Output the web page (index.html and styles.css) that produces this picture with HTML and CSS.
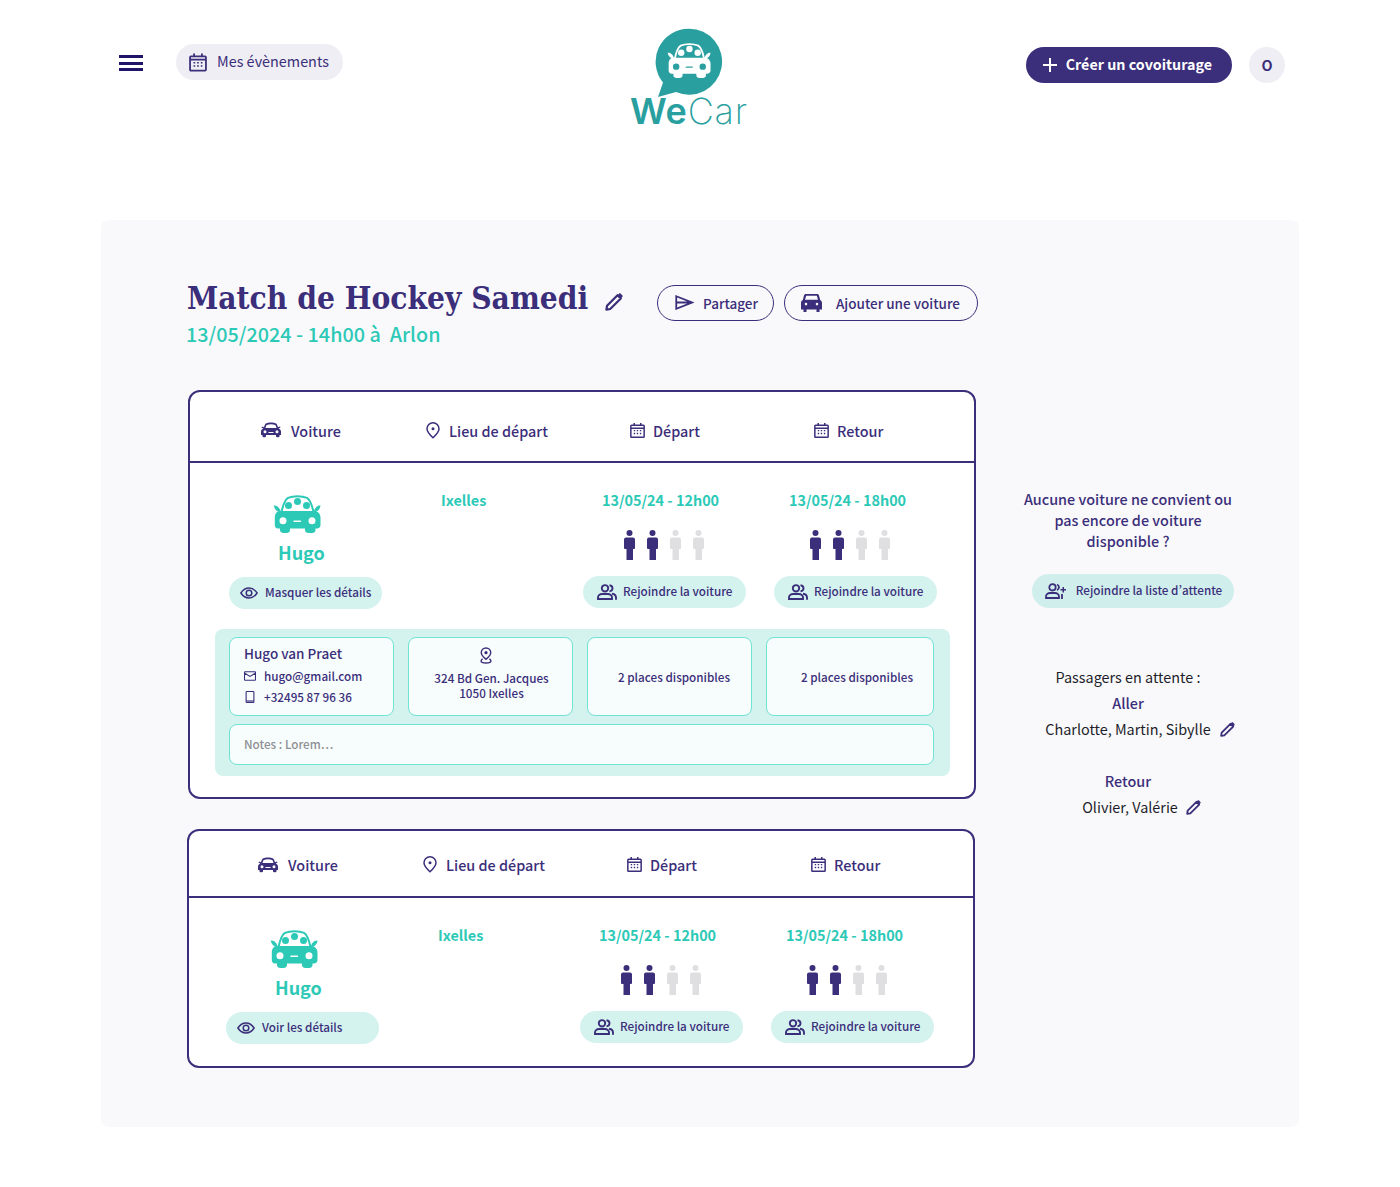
FILE: index.html
```html
<!DOCTYPE html>
<html lang="fr">
    <head>
        <meta charset="utf-8">
        <title>WeCar - Match de Hockey Samedi</title>
        <link rel="stylesheet" href="styles.css">
    </head>

    <body>
        <!-- Icons -->
        <svg class="icon-defs">
            <symbol id="i-car" viewBox="0 0 48 38">
                <path fill="none" stroke="currentColor" stroke-width="2" d="M8.5 17C10 10 12 4.500 15 2.800C20 .6 29 .6 34 2.800C37 4.500 39 10 40.500 17"/>
                <circle cx="15.500" cy="10.500" r="3.500" fill="currentColor"/>
                <circle cx="24.500" cy="6.500" r="3.500" fill="currentColor"/>
                <circle cx="33.500" cy="10.500" r="3.500" fill="currentColor"/>
                <path fill="currentColor" d="M.8 10.500C4 10 7 13 7.800 17C4 17 1.500 14.500.8 10.500ZM47.500 10.500C44.500 10 41.500 13 40.700 17C44.500 17 47 14.500 47.500 10.500Z"/>
                <path fill="currentColor" fill-rule="evenodd" d="M7 16H41.500C45 16 47.500 19 47.500 22.500V30C47.500 32 46 33.500 44 33.500H42.500V35C42.500 37 41 38 39 38H35.500C33.500 38 32 37 32 35V33.500H17V35C17 37 15.500 38 13.500 38H10.500C8.500 38 7 37 7 35V33.500H5C3 33.500 1.800 32 1.800 30V22.500C1.800 19 3.500 16 7 16ZM10 22.200A3.500 3.500 0 1 0 10 29.200A3.500 3.500 0 1 0 10 22.200ZM39 22.200A3.500 3.500 0 1 0 39 29.200A3.500 3.500 0 1 0 39 22.200ZM21 25.600A.7.7 0 0 0 21 27H27.500A.7.7 0 0 0 27.500 25.600Z"/>
            </symbol>
            <symbol id="i-calendar" viewBox="0 0 16 17">
                <path fill="none" stroke="currentColor" stroke-width="1.600" d="M1.700 3H14.300C14.800 3 15.100 3.300 15.100 3.800V15C15.100 15.500 14.800 15.800 14.300 15.800H1.700C1.200 15.800.9 15.500.9 15V3.800C.9 3.300 1.200 3 1.700 3ZM1 6H15M4.500.4V3.500M11.500.4V3.500"/>
                <path fill="currentColor" d="M4 8h1.500v1.400H4zM7.200 8h1.500v1.400H7.200zM10.500 8H12v1.400h-1.500zM4 11h1.500v1.400H4zM7.200 11h1.500v1.400H7.200zM10.500 11H12v1.400h-1.500z"/>
            </symbol>
            <symbol id="i-pin" viewBox="0 0 14 17">
                <path fill="none" stroke="currentColor" stroke-width="1.500" d="M7 15.800C4 13 1 10 1 6.800A6 6 0 0 1 13 6.800C13 10 10 13 7 15.800Z"/>
                <circle cx="7" cy="6.800" r="1.500" fill="currentColor"/>
            </symbol>
            <symbol id="i-pin-base" viewBox="0 0 14 18">
                <path fill="none" stroke="currentColor" stroke-width="1.500" d="M7 13C4.500 10.800 2 8.800 2 6A5 5 0 0 1 12 6C12 8.800 9.500 10.800 7 13ZM3.500 12.500C2 13.200 1.800 14 1.800 14.800C1.800 16.200 4 16.900 7 16.900S12.200 16.200 12.200 14.800C12.200 14 12 13.200 10.500 12.500"/>
                <circle cx="7" cy="6" r="1.700" fill="currentColor"/>
            </symbol>
            <symbol id="i-pencil" viewBox="0 0 18 18">
                <path fill="none" stroke="currentColor" stroke-width="2.200" stroke-linejoin="round" d="M1.400 16.600L2 12.800L12.500 2.200L15.800 5.500L5.200 16Z"/>
                <path fill="currentColor" d="M12.500 2.200L14 .7C14.500.2 15.200.2 15.700.7L17.300 2.300C17.800 2.800 17.800 3.500 17.300 4L15.800 5.500Z"/>
            </symbol>
            <symbol id="i-send" viewBox="0 0 20 16">
                <path fill="none" stroke="currentColor" stroke-width="1.900" d="M1.200 1.300L18 8L1.200 14.700ZM1.500 8H17"/>
            </symbol>
            <symbol id="i-car-front" viewBox="0 0 21 18">
                <path fill="currentColor" fill-rule="evenodd" d="M5 0H16C17 0 17.700.5 18 1.500L19.200 6C20.300 6.600 21 7.500 21 9V15.500H18.500V18H15.500V15.500H5.500V18H2.500V15.500H0V9C0 7.500.7 6.600 1.800 6L3 1.500C3.300.5 4 0 5 0ZM5.200 1.800L4 5.800H17L15.800 1.800ZM5 8.800A1.300 1.300 0 1 0 5 11.400A1.300 1.300 0 1 0 5 8.800ZM16 8.800A1.300 1.300 0 1 0 16 11.400A1.300 1.300 0 1 0 16 8.800Z"/>
            </symbol>
            <symbol id="i-car-side" viewBox="0 0 20 16">
                <path fill="currentColor" fill-rule="evenodd" d="M5 1.500C7.500.3 12.500.3 15 1.500C16 2 16.500 3.500 17 5.200L19 4.500L19.500 5.500L17.600 6.400C19 7 20 8 20 9.500V13H18.500V14.500C18.500 15.500 15 15.500 15 14.500V13H5V14.500C5 15.500 1.500 15.500 1.500 14.500V13H0V9.500C0 8 1 7 2.400 6.400L.5 5.500L1 4.500L3 5.200C3.500 3.500 4 2 5 1.500ZM5.800 3C5.200 3.500 4.800 4.800 4.500 6H15.500C15.200 4.800 14.800 3.500 14.200 3C12 2 8 2 5.800 3ZM4 8.200A1.500 1.500 0 1 0 4 11.200A1.500 1.500 0 1 0 4 8.200ZM16 8.200A1.500 1.500 0 1 0 16 11.200A1.500 1.500 0 1 0 16 8.200ZM7.500 10V11H12.500V10Z"/>
            </symbol>
            <symbol id="i-eye" viewBox="0 0 18 12">
                <path fill="none" stroke="currentColor" stroke-width="1.500" d="M.9 6C3 2.800 5.800 1 9 1S15 2.800 17.100 6C15 9.200 12.200 11 9 11S3 9.200 .9 6Z"/>
                <circle cx="9" cy="6" r="2.800" fill="none" stroke="currentColor" stroke-width="1.500"/>
            </symbol>
            <symbol id="i-users" viewBox="0 0 20 16">
                <circle cx="8" cy="4.300" r="3.200" fill="none" stroke="currentColor" stroke-width="1.900"/>
                <path fill="none" stroke="currentColor" stroke-width="1.900" d="M1 15V13.500C1 11.500 3 10 5 10H10.800C13 10 15 11.500 15 13.500V15H1Z"/>
                <path fill="none" stroke="currentColor" stroke-width="1.900" d="M12.500 1.200C14.200 1.400 15.500 2.700 15.500 4.300S14.200 7.200 12.500 7.400M15 9.800C17.500 10.200 19 11.700 19 13.500V15.800"/>
            </symbol>
            <symbol id="i-user-plus" viewBox="0 0 22 16">
                <circle cx="7.500" cy="4.300" r="3.200" fill="none" stroke="currentColor" stroke-width="1.800"/>
                <path fill="none" stroke="currentColor" stroke-width="1.800" d="M1 15V13.500C1 11.500 3 10 5 10H10C12 10 14 11.500 14 13.500V15H1ZM12 1.500C13.300 2 14 3 14 4.300S13.300 6.600 12 7.100M17 11V16"/>
                <path fill="currentColor" d="M17.500 4H19V6H21V7.500H19V9.500H17.500V7.500H15.500V6H17.500Z"/>
            </symbol>
            <symbol id="i-mail" viewBox="0 0 12 10">
                <path fill="none" stroke="currentColor" stroke-width="1.100" d="M1 .8H11C11.300.8 11.500 1 11.500 1.300V8.700C11.500 9 11.300 9.200 11 9.200H1C.7 9.200.5 9 .5 8.700V1.300C.5 1 .7 .8 1 .8ZM.8 2.200L6 5.400L11.200 2.200"/>
            </symbol>
            <symbol id="i-phone" viewBox="0 0 10 13">
                <path fill="none" stroke="currentColor" stroke-width="1.200" d="M1.500.6H8.500C8.900.6 9.200.9 9.200 1.300V11.700C9.200 12.100 8.900 12.400 8.500 12.400H1.500C1.100 12.400.8 12.100.8 11.700V1.300C.8.900 1.100.6 1.500.6Z"/>
                <path fill="currentColor" opacity=".6" d="M1 9.800H9V12H1Z"/>
            </symbol>
            <symbol id="i-person" viewBox="0 0 11 30">
                <circle cx="5.500" cy="3" r="3" fill="currentColor"/>
                <path fill="currentColor" d="M2 7.500H9A2 2 0 0 1 11 9.500V18A1 1 0 0 1 10 19H9V30H2.500V19H1A1 1 0 0 1 0 18V9.500A2 2 0 0 1 2 7.500Z"/>
            </symbol>
        </svg>

        <!-- Header -->
        <header class="topbar">
            <div class="burger"><span></span><span></span><span></span></div>
            <a class="events-pill" href="#">
                <svg class="ico-18"><use href="#i-calendar"/></svg>
                Mes évènements
            </a>
            <a class="logo" href="#">
                <svg class="logo-bubble" viewBox="0 0 68 70">
                    <path fill="#2a9fa0" d="M34 .7A33 33 0 1 1 21 64L3 69L8 54.500A33 33 0 0 1 34 .7Z"/>
                    <svg x="12" y="15" width="44" height="35" color="#fff"><use href="#i-car"/></svg>
                </svg>
                <span class="logo-text"><b>We</b>Car</span>
            </a>
            <div class="topbar-right">
                <a class="create-btn" href="#">
                    <svg class="plus" viewBox="0 0 14 14"><path d="M7 0V14M0 7H14"/></svg>
                    Créer un covoiturage
                </a>
                <div class="avatar">O</div>
            </div>
        </header>

        <!-- Contents -->
        <main class="panel">
            <div class="title-row">
                <h1>Match de Hockey Samedi</h1>
                <svg class="title-edit"><use href="#i-pencil"/></svg>
                <a class="outline-btn share" href="#">
                    <svg class="ico-send"><use href="#i-send"/></svg>
                    Partager
                </a>
                <a class="outline-btn add-car" href="#">
                    <svg class="ico-front"><use href="#i-car-front"/></svg>
                    Ajouter une voiture
                </a>
            </div>
            <div class="subtitle">13/05/2024 - 14h00 à&nbsp; Arlon</div>

            <div class="columns">
                <div class="cars">
                    <!-- first car, details open -->
                    <section class="car-card">
                        <div class="car-head">
                            <span><svg class="ico-car-side"><use href="#i-car-side"/></svg>Voiture</span>
                            <span><svg class="ico-pin"><use href="#i-pin"/></svg>Lieu de départ</span>
                            <span><svg class="ico-cal"><use href="#i-calendar"/></svg>Départ</span>
                            <span><svg class="ico-cal"><use href="#i-calendar"/></svg>Retour</span>
                        </div>
                        <div class="car-body">
                            <div class="driver">
                                <svg class="driver-car"><use href="#i-car"/></svg>
                                <div class="driver-name">Hugo</div>
                                <a class="soft-btn details-btn" href="#"><svg class="ico-eye"><use href="#i-eye"/></svg>Masquer les détails</a>
                            </div>
                            <div class="place">Ixelles</div>
                            <div class="trip">
                                <div class="trip-date">13/05/24 - 12h00</div>
                                <div class="seats">
                                    <svg class="seat taken"><use href="#i-person"/></svg>
                                    <svg class="seat taken"><use href="#i-person"/></svg>
                                    <svg class="seat"><use href="#i-person"/></svg>
                                    <svg class="seat"><use href="#i-person"/></svg>
                                </div>
                                <a class="soft-btn join-btn" href="#"><svg class="ico-users"><use href="#i-users"/></svg>Rejoindre la voiture</a>
                            </div>
                            <div class="trip trip-back">
                                <div class="trip-date">13/05/24 - 18h00</div>
                                <div class="seats">
                                    <svg class="seat taken"><use href="#i-person"/></svg>
                                    <svg class="seat taken"><use href="#i-person"/></svg>
                                    <svg class="seat"><use href="#i-person"/></svg>
                                    <svg class="seat"><use href="#i-person"/></svg>
                                </div>
                                <a class="soft-btn join-btn" href="#"><svg class="ico-users"><use href="#i-users"/></svg>Rejoindre la voiture</a>
                            </div>
                        </div>
                        <div class="details">
                            <div class="info-grid">
                                <div class="info-box contact">
                                    <div class="contact-name">Hugo van Praet</div>
                                    <div class="contact-line"><svg class="ico-mail"><use href="#i-mail"/></svg>hugo@gmail.com</div>
                                    <div class="contact-line"><svg class="ico-mail"><use href="#i-phone"/></svg>+32495 87 96 36</div>
                                </div>
                                <div class="info-box address">
                                    <svg class="ico-pin-base"><use href="#i-pin-base"/></svg>
                                    <div>324 Bd Gen. Jacques<br>1050 Ixelles</div>
                                </div>
                                <div class="info-box centered">2 places disponibles</div>
                                <div class="info-box centered places-back">2 places disponibles</div>
                            </div>
                            <div class="notes">Notes : Lorem…</div>
                        </div>
                    </section>

                    <!-- second car -->
                    <section class="car-card closed">
                        <div class="car-head">
                            <span><svg class="ico-car-side"><use href="#i-car-side"/></svg>Voiture</span>
                            <span><svg class="ico-pin"><use href="#i-pin"/></svg>Lieu de départ</span>
                            <span><svg class="ico-cal"><use href="#i-calendar"/></svg>Départ</span>
                            <span><svg class="ico-cal"><use href="#i-calendar"/></svg>Retour</span>
                        </div>
                        <div class="car-body">
                            <div class="driver">
                                <svg class="driver-car"><use href="#i-car"/></svg>
                                <div class="driver-name">Hugo</div>
                                <a class="soft-btn details-btn" href="#"><svg class="ico-eye"><use href="#i-eye"/></svg>Voir les détails</a>
                            </div>
                            <div class="place">Ixelles</div>
                            <div class="trip">
                                <div class="trip-date">13/05/24 - 12h00</div>
                                <div class="seats">
                                    <svg class="seat taken"><use href="#i-person"/></svg>
                                    <svg class="seat taken"><use href="#i-person"/></svg>
                                    <svg class="seat"><use href="#i-person"/></svg>
                                    <svg class="seat"><use href="#i-person"/></svg>
                                </div>
                                <a class="soft-btn join-btn" href="#"><svg class="ico-users"><use href="#i-users"/></svg>Rejoindre la voiture</a>
                            </div>
                            <div class="trip trip-back">
                                <div class="trip-date">13/05/24 - 18h00</div>
                                <div class="seats">
                                    <svg class="seat taken"><use href="#i-person"/></svg>
                                    <svg class="seat taken"><use href="#i-person"/></svg>
                                    <svg class="seat"><use href="#i-person"/></svg>
                                    <svg class="seat"><use href="#i-person"/></svg>
                                </div>
                                <a class="soft-btn join-btn" href="#"><svg class="ico-users"><use href="#i-users"/></svg>Rejoindre la voiture</a>
                            </div>
                        </div>
                    </section>
                </div>

                <!-- Waiting list -->
                <aside class="waiting">
                    <p class="waiting-question">Aucune voiture ne convient ou pas encore de voiture disponible ?</p>
                    <a class="soft-btn wait-btn" href="#"><svg class="ico-user-plus"><use href="#i-user-plus"/></svg>Rejoindre la liste d’attente</a>
                    <div class="waiting-title">Passagers en attente :</div>
                    <div class="waiting-label">Aller</div>
                    <div class="waiting-names">Charlotte, Martin, Sibylle <svg class="ico-edit"><use href="#i-pencil"/></svg></div>
                    <div class="waiting-label second">Retour</div>
                    <div class="waiting-names back">Olivier, Valérie <svg class="ico-edit"><use href="#i-pencil"/></svg></div>
                </aside>
            </div>
        </main>
    </body>
</html>
```

FILE: styles.css
```css
/* Background and Text */
body {
    margin: 0;
    background-color: #fff;
    color: #3b2e7a;
    font-family: "Noto Sans CJK SC", "Noto Sans", sans-serif;
    font-size: 14.4px;
}
a {
    color: inherit;
    text-decoration: none;
}
svg {
    display: block;
    flex: none;
}
.icon-defs {
    display: none;
}

/* Header */
.topbar {
    display: flex;
    align-items: flex-start;
    height: 220px;
    padding: 28px 115px 0 119px;
    box-sizing: border-box;
}
.burger {
    display: flex;
    flex-direction: column;
    gap: 3.5px;
    width: 24px;
    margin-top: 27px;
}
.burger span {
    height: 3px;
    background-color: #1f1468;
}
.events-pill {
    display: flex;
    align-items: center;
    gap: 10px;
    height: 36px;
    box-sizing: border-box;
    margin: 16px 0 0 33px;
    padding: 0 14px 3px 13px;
    border-radius: 18px;
    background-color: #efeef4;
    font-size: 14.4px;
}
.ico-18 {
    width: 18px;
    height: 19px;
    margin-top: 3px;
}
.logo {
    display: flex;
    flex-direction: column;
    align-items: center;
    width: 118px;
    margin-left: 287px;
    color: #2a9fa0;
}
.logo-bubble {
    width: 68px;
    height: 70px;
}
.logo-text {
    margin-top: -2px;
    font-family: Inter, sans-serif;
    font-size: 36px;
    font-weight: 200;
    line-height: 30px;
    letter-spacing: 0.8px;
    white-space: nowrap;
}
.logo-text b {
    font-weight: 600;
}
.topbar-right {
    display: flex;
    gap: 17px;
    margin: 19px 0 0 auto;
}
.create-btn {
    display: flex;
    align-items: center;
    gap: 9px;
    height: 36px;
    box-sizing: border-box;
    padding: 0 20px 3px 17px;
    border-radius: 18px;
    background-color: #3b2e7a;
    color: #fff;
    font-size: 14.3px;
    font-weight: 700;
}
.plus {
    width: 14px;
    height: 14px;
    margin-top: 3px;
    stroke: #fff;
    stroke-width: 2;
}
.avatar {
    display: flex;
    align-items: center;
    justify-content: center;
    width: 36px;
    height: 36px;
    box-sizing: border-box;
    padding-bottom: 2px;
    border-radius: 50%;
    background-color: #efeef4;
    font-weight: 700;
}

/* Panel */
.panel {
    margin: 0 101px 60px;
    padding: 65px 0 59px 87px;
    border-radius: 8px;
    background-color: #f9f9fb;
}
.title-row {
    display: flex;
    align-items: center;
    height: 36px;
}
h1 {
    width: 401px;
    margin: 0 0 10px -1px;
    font-family: "DejaVu Serif Condensed", "DejaVu Serif", serif;
    font-stretch: condensed;
    font-size: 31.4px;
    font-weight: 700;
    line-height: 36px;
    white-space: nowrap;
}
.title-edit {
    width: 18px;
    height: 18px;
    margin: 0 34px 3px 17px;
}
.outline-btn {
    display: flex;
    align-items: center;
    height: 36px;
    box-sizing: border-box;
    padding-bottom: 1px;
    border: 1px solid #3b2e7a;
    border-radius: 18px;
    font-size: 13.5px;
    font-weight: 500;
}
.share {
    gap: 9px;
    padding-left: 17px;
    padding-right: 15px;
}
.add-car {
    gap: 14px;
    margin-left: 10px;
    padding-left: 16px;
    padding-right: 17px;
}
.ico-send {
    width: 19px;
    height: 15px;
}
.ico-front {
    width: 21px;
    height: 18px;
}
.subtitle {
    margin: 2px 0 0 -2px;
    color: #2cc9b7;
    font-size: 19.8px;
    font-weight: 500;
    line-height: 22px;
}
.columns {
    display: flex;
    margin-top: 45px;
}
.cars {
    width: 788px;
    flex: none;
}

/* Car cards */
.car-card {
    border: 2px solid #3b2e7a;
    border-radius: 12px;
    background-color: #fff;
    padding-bottom: 21px;
}
.car-card.closed {
    margin: 30px 1px 0 -1px;
    padding-bottom: 22px;
}
.car-head {
    display: grid;
    grid-template-columns: 165px 204px 184px auto;
    align-items: center;
    height: 62px;
    padding: 7px 0 0 71px;
    border-bottom: 2px solid #3b2e7a;
    font-weight: 500;
}
.closed .car-head {
    height: 63px;
    padding: 2px 0 0 69px;
}
.closed .car-body {
    padding-left: 37px;
}
.car-head span {
    display: flex;
    align-items: center;
}
.ico-car-side {
    width: 20px;
    height: 16px;
    margin-right: 10px;
}
.ico-pin {
    width: 14px;
    height: 17px;
    margin-right: 9px;
}
.ico-cal {
    width: 15px;
    height: 17px;
    margin-right: 8px;
}
.car-body {
    display: grid;
    grid-template-columns: 153px 145px 163px 163px;
    column-gap: 28px;
    padding-left: 39px;
}
.driver,
.trip {
    display: flex;
    flex-direction: column;
    align-items: flex-start;
}
.driver {
    padding-top: 32px;
}
.driver-car {
    width: 48px;
    height: 38px;
    margin-left: 44px;
    color: #2cc9b7;
}
.driver-name {
    margin: 5px 0 0 49px;
    color: #2cc9b7;
    font-size: 18px;
    font-weight: 700;
    line-height: 28px;
}
.place,
.trip-date {
    color: #2cc9b7;
    font-weight: 700;
    line-height: 20px;
}
.place {
    padding: 27px 0 0 31px;
}
.trip {
    padding-top: 27px;
}
.trip-date {
    margin-left: 19px;
}
.seats {
    display: flex;
    gap: 12px;
    margin: 20px 0 0 41px;
}
.trip-back .trip-date {
    margin-left: 15px;
}
.trip-back .seats {
    margin-left: 36px;
}
.seat {
    width: 11px;
    height: 30px;
    color: #dfdfe2;
}
.seat.taken {
    color: #3b2e7a;
}

/* Soft buttons */
.soft-btn {
    display: flex;
    align-items: center;
    height: 32px;
    box-sizing: border-box;
    padding-bottom: 3px;
    border-radius: 16px;
    background-color: #d4f3ef;
    font-size: 11.7px;
    font-weight: 500;
    white-space: nowrap;
}
.soft-btn svg {
    margin-top: 3px;
}
.details-btn {
    width: 153px;
    margin-top: 11px;
    padding-left: 11px;
}
.join-btn {
    width: 163px;
    margin-top: 16px;
    padding-left: 14px;
}
.ico-eye {
    width: 18px;
    height: 12px;
    margin-right: 7px;
}
.ico-users {
    width: 20px;
    height: 16px;
    margin-right: 6px;
}
.ico-user-plus {
    width: 22px;
    height: 16px;
    margin-right: 9px;
}

/* Details */
.details {
    margin: 20px 24px 0 25px;
    padding: 8px 16px 11px 14px;
    border-radius: 8px;
    background-color: #d4f3ef;
}
.info-grid {
    display: grid;
    grid-template-columns: 165px 165px 165px 168px;
    column-gap: 14px;
}
.info-box,
.notes {
    box-sizing: border-box;
    border: 1px solid #6fe3d6;
    border-radius: 8px;
    background-color: #f7fdfc;
    font-size: 11.7px;
    font-weight: 500;
}
.info-box {
    height: 79px;
}
.centered {
    display: flex;
    align-items: center;
    justify-content: center;
    padding-left: 9px;
}
.places-back {
    padding-left: 14px;
}
.contact {
    padding: 4px 0 0 14px;
}
.contact-name {
    font-size: 13.5px;
    line-height: 23px;
}
.contact-line {
    display: flex;
    align-items: center;
    height: 21px;
}
.ico-mail {
    width: 12px;
    height: 12px;
    margin-right: 8px;
}
.address {
    display: flex;
    flex-direction: column;
    align-items: center;
    padding: 9px 0 0 2px;
    text-align: center;
    line-height: 15px;
}
.ico-pin-base {
    width: 14px;
    height: 17px;
    margin: 0 12px 6px 0;
}
.notes {
    display: flex;
    align-items: center;
    height: 41px;
    margin-top: 8px;
    padding: 0 0 3px 14px;
    color: #8f8f96;
}

/* Waiting list */
.waiting {
    display: flex;
    flex-direction: column;
    align-items: center;
    width: 240px;
    margin-left: 32px;
    padding-top: 98px;
    text-align: center;
}
.waiting-question {
    width: 216px;
    margin: 0;
    font-weight: 500;
    line-height: 21px;
}
.wait-btn {
    height: 34px;
    margin: 23px 0 0 10px;
    padding: 0 12px 3px 13px;
    border-radius: 17px;
    background-color: #d0efec;
    font-feature-settings: "pwid";
}
.waiting-title {
    margin-top: 58px;
    color: #1e1e2a;
    line-height: 22px;
}
.waiting-label {
    margin-top: 4px;
    font-weight: 500;
    line-height: 22px;
}
.waiting-label.second {
    margin-top: 30px;
}
.waiting-names {
    display: flex;
    align-items: center;
    gap: 9px;
    margin-top: 4px;
    color: #1e1e2a;
    line-height: 22px;
}
.waiting-names.back {
    gap: 8px;
    padding-left: 3px;
}
.ico-edit {
    width: 15px;
    height: 15px;
    margin-right: -24px;
    color: #3b2e7a;
}
```
